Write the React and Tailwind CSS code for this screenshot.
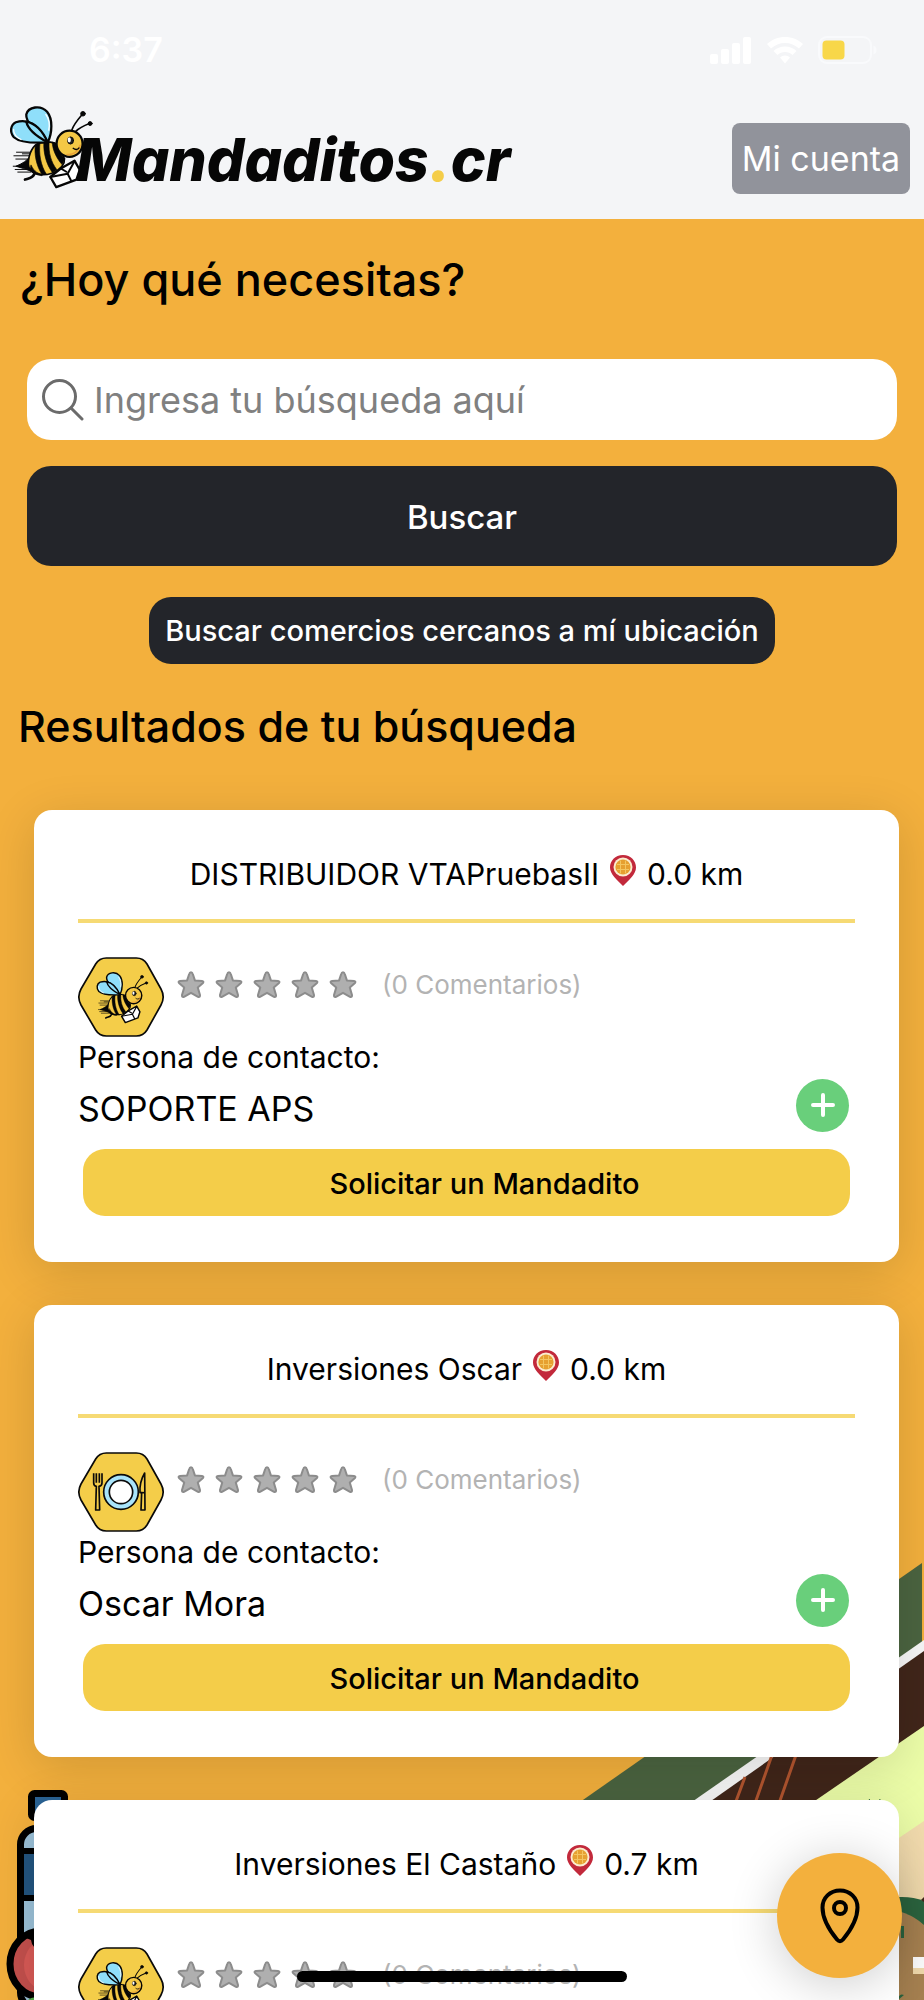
const businesses = [
  { name: 'DISTRIBUIDOR VTAPruebasII', distance: '0.0 km', contact: 'SOPORTE APS', kind: 'bee' },
  { name: 'Inversiones Oscar', distance: '0.0 km', contact: 'Oscar Mora', kind: 'food' },
  { name: 'Inversiones El Castaño', distance: '0.7 km', contact: null, kind: 'bee' },
];

function BeeShape() {
  return (
    <g stroke="#060606" strokeLinecap="round" strokeLinejoin="round">
      <g strokeWidth="3" fill="none">
        <path d="M50 186H98M42 197H92M48 207H90M40 229H90M46 239H92M54 247H94M68 191H100" />
      </g>
      <path d="M94 196C84 212 66 222 48 229C64 234 80 238 94 244Z" fill="#060606" strokeWidth="3" />
      <path d="M105 252C100 266 90 265 76 270M160 238C168 246 172 248 182 246" fill="none" strokeWidth="8" />
      <path d="M108 164C91 180 80 216 91 240C108 260 152 260 178 240C196 226 202 212 194 198L168 158C146 152 122 154 108 164Z" fill="#f4c845" strokeWidth="5" />
      <path d="M108 164C104 190 110 226 128 254L142 254C124 226 118 190 122 158ZM134 156C132 188 142 224 160 248L174 240C156 216 148 188 150 156ZM160 156C160 176 172 204 190 224L199 206C184 192 176 176 172 160ZM95 226C104 246 118 253 132 254L128 258C110 256 98 250 90 240Z" fill="#060606" strokeWidth="2" />
      <path d="M146 156C112 128 78 96 80 70C86 46 124 40 144 62C162 84 160 126 146 156Z" fill="#8fdffa" strokeWidth="7" />
      <path d="M146 156C112 158 62 158 42 140C28 124 32 102 48 94C86 82 114 100 146 156Z" fill="#8fdffa" strokeWidth="7" />
      <path d="M80 92C84 112 108 136 146 156C132 124 112 98 80 92Z" fill="#8fdffa" strokeWidth="7" />
      <path d="M140 70C150 84 152 104 149 118M41 116C40 128 50 142 64 147" fill="none" stroke="#fff" strokeWidth="4" />
      <circle cx="213" cy="160" r="40" fill="#f4c845" strokeWidth="7" />
      <path d="M245 165C240 185 222 195 205 193" fill="none" stroke="#e9a23a" strokeWidth="5" />
      <ellipse cx="216" cy="150" rx="9" ry="11" fill="#222" strokeWidth="3" />
      <ellipse cx="212" cy="148" rx="5" ry="8" fill="#fff" stroke="none" />
      <path d="M224 174C230 179 238 179 242 173" fill="none" strokeWidth="4" />
      <path d="M220 118C226 100 240 84 252 70M232 122C242 112 256 105 274 98" fill="none" strokeWidth="5" />
      <circle cx="254" cy="68" r="7" fill="#060606" strokeWidth="3" />
      <circle cx="276" cy="98" r="6" fill="#060606" strokeWidth="3" />
      <path d="M154 262L186 236L228 212L244 240L234 270L172 293Z" fill="#fff" strokeWidth="7" />
      <path d="M154 262L207 252L218 274M207 252L228 214M186 236L203 246" fill="none" strokeWidth="6" />
    </g>
  );
}

function Hexagon({ kind }) {
  return (
    <svg viewBox="0 0 258 240" className="h-20 w-[86px] shrink-0" aria-hidden="true">
      <path
        d="M85 3H175Q196 3 207 21L249 96Q262 120 249 144L207 219Q196 237 175 237H85Q64 237 53 219L9 144Q-4 120 9 96L53 21Q64 3 85 3Z"
        fill="#f4cd49"
        stroke="#0a0a0a"
        strokeWidth="5"
      />
      {kind === 'bee' ? (
        <g transform="translate(37 18) scale(0.61)">
          <BeeShape />
        </g>
      ) : (
        <g stroke="#0a0a0a" strokeLinejoin="round">
          <circle cx="129" cy="120" r="52" fill="#a9e4fa" strokeWidth="5" />
          <circle cx="129" cy="120" r="35" fill="#fff" strokeWidth="5" />
          <path d="M47 64V92Q47 101 55 103L53 174H65L63 103Q72 101 72 92V64M55 64V92M64 64V92" fill="#f4cd49" strokeWidth="5" />
          <path d="M200 63Q184 90 186 122H191L189 174H201Z" fill="#f4cd49" strokeWidth="5" />
          <path d="M191 122H200" strokeWidth="5" />
        </g>
      )}
    </svg>
  );
}

function Star() {
  return (
    <svg viewBox="0 0 30 30" className="size-[30px]" aria-hidden="true">
      <path
        d="M15 2.200Q16.300 2.200 16.800 4L18.900 10.400L26 10.900Q28.200 11.300 27 13L21.800 17.600L24 25Q24.200 27.600 22 26.800L15 22.800L8 26.800Q5.800 27.600 6 25L8.200 17.600L3 13Q1.800 11.300 4 10.900L11.100 10.400L13.200 4Q13.700 2.200 15 2.200Z"
        fill="#afafaf"
        stroke="#8c8c8c"
        strokeWidth="2"
        strokeLinejoin="round"
      />
    </svg>
  );
}

function DistancePin() {
  return (
    <svg viewBox="0 0 28 31" className="mx-2.5 mb-2 inline-block h-[31px] w-7" aria-hidden="true">
      <path d="M14 0C6 0 1 6 1 12.500C1 19 8 25 14 31C20 25 27 19 27 12.500C27 6 22 0 14 0Z" fill="#c2293b" />
      <circle cx="14" cy="12" r="9.500" fill="#fbeccf" />
      <circle cx="14" cy="12" r="7.600" fill="#e6a030" />
      <path d="M8 9.500H20M8 14.500H20M11.500 5.500V18.500M16.500 5.500V18.500" stroke="#f3c560" strokeWidth="1" />
    </svg>
  );
}

function BusinessCard({ business }) {
  return (
    <article className="rounded-[18px] bg-white px-11 pt-11 pb-[46px] shadow-[0_10px_50px_rgba(0,0,0,0.14)]">
      <h3 className="flex h-10 items-center justify-center text-[30px] leading-10">
        <span>{business.name}</span>
        <DistancePin />
        <span>{business.distance}</span>
      </h3>
      <hr className="mt-[25px] border-t-4 border-[#f6da74]" />
      <div className="mt-[34px] flex gap-3">
        <Hexagon kind={business.kind} />
        <div className="flex h-14 items-center gap-2">
          <Star />
          <Star />
          <Star />
          <Star />
          <Star />
          <span className="ml-4 text-[26px] leading-10 text-[#b3b3b3]">(0 Comentarios)</span>
        </div>
      </div>
      {business.contact && (
        <>
          <p className="text-[30px] leading-10">Persona de contacto:</p>
          <div className="flex h-14 items-center justify-between pr-[6px]">
            <p className="pt-2 text-[34px] leading-10">{business.contact}</p>
            <button type="button" aria-label="Agregar" className="flex size-[53px] items-center justify-center rounded-full bg-[#69cf7b]">
              <svg viewBox="0 0 24 24" className="size-6" aria-hidden="true">
                <path d="M12 2V22M2 12H22" stroke="#fff" strokeWidth="4" strokeLinecap="round" />
              </svg>
            </button>
          </div>
          <div className="mt-4 px-[5px]">
            <button type="button" className="h-[67px] w-full rounded-[22px] bg-[#f4cd49] pt-0.5 pl-9 text-[29px] leading-10 font-medium">
              Solicitar un Mandadito
            </button>
          </div>
        </>
      )}
    </article>
  );
}

function StatusBar() {
  return (
    <div className="flex h-[100px] items-center justify-between pr-[47px] pl-[89px] text-white">
      <span className="text-[34px] leading-10 font-semibold">6:37</span>
      <div className="flex items-center gap-[15px]">
        <svg viewBox="0 0 42 27" className="h-[27px] w-[42px]" fill="#fff" aria-hidden="true">
          <rect x="0" y="17" width="8" height="10" rx="2" />
          <rect x="11" y="12" width="8" height="15" rx="2" />
          <rect x="22" y="6" width="8" height="21" rx="2" />
          <rect x="33" y="0" width="8" height="27" rx="2" />
        </svg>
        <svg viewBox="0 0 36 27" className="h-[27px] w-9" fill="#fff" aria-hidden="true">
          <path d="M18 0C11 0 5 2.500 0 7L4 11.500C8 8 12.500 6 18 6S28 8 32 11.500L36 7C31 2.500 25 0 18 0Z" />
          <path d="M18 9.500C13.500 9.500 9.500 11 6.500 14L10.500 18C12.500 16.200 15 15 18 15S23.500 16.200 25.500 18L29.500 14C26.500 11 22.500 9.500 18 9.500Z" />
          <path d="M18 18.500C16 18.500 14.300 19.300 13 20.500L18 26.500L23 20.500C21.700 19.300 20 18.500 18 18.500Z" />
        </svg>
        <svg viewBox="0 0 59 28" className="h-7 w-[59px]" aria-hidden="true">
          <rect x="1" y="1" width="52" height="26" rx="8" fill="none" stroke="#f9fafc" strokeWidth="2" />
          <path d="M55.500 9.500Q58.500 10.500 58.500 14T55.500 18.500Z" fill="#f9fafc" />
          <rect x="4.500" y="4.500" width="22" height="19" rx="4" fill="#f8d749" />
        </svg>
      </div>
    </div>
  );
}

function Backdrop() {
  return (
    <div className="pointer-events-none absolute inset-x-0 bottom-0 flex items-end justify-between" aria-hidden="true">
      <svg viewBox="0 1780 80 220" className="h-[220px] w-20">
        <rect x="31.500" y="1793.500" width="33" height="24" rx="3" fill="#2b6496" stroke="#000" strokeWidth="7" />
        <rect x="20.500" y="1828.500" width="60" height="180" rx="16" fill="#9bc1d8" stroke="#000" strokeWidth="7" />
        <rect x="21" y="1851" width="56" height="47" fill="#235580" stroke="#000" strokeWidth="6" />
        <ellipse cx="41" cy="1964" rx="31" ry="33" fill="#c4504d" stroke="#000" strokeWidth="7" />
        <ellipse cx="45" cy="1965" rx="21" ry="25" fill="#d85a56" />
        <path d="M26 1938Q30 1929 40 1929V1950Q32 1948 31 1940Z" fill="#000" />
        <path d="M28 2000Q32 1996 40 1998V2000Z" fill="#56b04c" />
      </svg>
      <svg viewBox="560 1550 364 450" className="h-[450px] w-[364px]">
        <path d="M560 1816L922 1563V1660L694 1820H560Z" fill="#4b6440" />
        <path d="M666 1820L924 1640V1700L700 1820Z" fill="#f7f7f7" />
        <path d="M684 1820L924 1651V1740L800 1820Z" fill="#41261a" />
        <path d="M745 1777L732 1812M772 1755L752 1812M796 1755L776 1812" stroke="#b2552f" strokeWidth="3" />
        <path d="M787 1820L924 1726V1830L850 1880L787 1850Z" fill="#ecfda8" />
        <path d="M869 1799L872 1803M880 1799L879 1803" stroke="#2c6640" strokeWidth="1" />
        <path d="M850 1871L924 1821V2000H850Z" fill="#f3dcae" />
        <path d="M880 1897H902Q914 1897 924 1901V2000H880Z" fill="#2c6640" />
        <path d="M880 1908Q908 1910 924 1925V2000H880Z" fill="#a98352" />
        <path d="M921 1900L924 1897V1902Z" fill="#41261a" />
        <rect x="901" y="1926" width="3" height="12" fill="#2c6640" />
        <path d="M898 1998Q900 1993 904 1995L898 2000Z" fill="#2c6640" />
        <rect x="913" y="1957" width="11" height="11" fill="#fff" />
        <rect x="913" y="1968" width="11" height="6" fill="#f3dcae" />
      </svg>
    </div>
  );
}

export default function App() {
  return (
    <div className="relative flex h-screen flex-col overflow-hidden bg-[#f3b03d] font-[Inter,sans-serif] text-black">
      <Backdrop />
      <header className="h-[219px] shrink-0 bg-[#f4f5f7]">
        <StatusBar />
        <div className="flex items-start justify-between pr-3.5 pl-2">
          <a href="#inicio" aria-label="Mandaditos.cr" className="flex items-end pt-1">
            <svg viewBox="24 38 270 264" className="h-[86px] w-[88px] shrink-0" aria-hidden="true">
              <BeeShape />
            </svg>
            <span className="-ml-5 text-[59px] leading-[60px] font-extrabold text-[#060606] italic [font-feature-settings:'cv11']">
              Mandaditos<span className="font-black text-[#f4cd49]">.</span>cr
            </span>
          </a>
          <button type="button" className="mt-[23px] h-[71px] w-[178px] rounded-lg bg-[#91939b] text-[34px] leading-10 text-white">
            Mi cuenta
          </button>
        </div>
      </header>

      <main className="relative">
        <h1 className="px-5 pt-[31px] text-[45px] leading-[60px] font-medium">¿Hoy qué necesitas?</h1>
        <form className="px-[27px] pt-[49px]" onSubmit={(event) => event.preventDefault()}>
          <label className="flex h-[81px] items-center gap-2.5 rounded-3xl bg-white pr-6 pl-[15px]">
            <svg viewBox="0 0 42 42" className="size-[42px] shrink-0" fill="none" stroke="#6b6b6b" strokeWidth="3" strokeLinecap="round" aria-hidden="true">
              <circle cx="17.500" cy="17.500" r="16" />
              <path d="M29 29L40 40" />
            </svg>
            <input
              type="text"
              aria-label="Búsqueda"
              placeholder="Ingresa tu búsqueda aquí"
              className="h-full min-w-0 grow bg-transparent text-[36px] outline-none placeholder:text-[#808080]"
            />
          </label>
          <button type="submit" className="mt-[26px] h-[100px] w-full rounded-3xl bg-[#23252a] pt-0.5 text-[33px] leading-10 font-medium text-white">
            Buscar
          </button>
        </form>
        <div className="flex justify-center pt-[31px]">
          <button type="button" className="h-[67px] rounded-[22px] bg-[#23252a] px-4 text-[29px] leading-10 font-medium text-white">
            Buscar comercios cercanos a mí ubicación
          </button>
        </div>
        <h2 className="px-[18px] pt-8 text-[43px] leading-[60px] font-medium">Resultados de tu búsqueda</h2>
        <div className="flex flex-col gap-[43px] pt-[54px] pr-[25px] pl-[34px]">
          {businesses.map((business) => (
            <BusinessCard key={business.name} business={business} />
          ))}
        </div>
      </main>

      <button
        type="button"
        aria-label="Mi ubicación"
        className="fixed right-[22px] bottom-[22px] flex size-[125px] items-center justify-center rounded-full bg-[#f3b03d] shadow-[0_6px_50px_rgba(0,0,0,0.2)]"
      >
        <svg viewBox="0 0 40 56" className="h-14 w-10" fill="none" stroke="#000" strokeWidth="4" strokeLinejoin="round" aria-hidden="true">
          <path d="M20 2.500C10 2.500 2.500 10 2.500 19.500C2.500 31 10 43 17 51.500Q20 55 23 51.500C30 43 37.500 31 37.500 19.500C37.500 10 30 2.500 20 2.500Z" />
          <circle cx="20" cy="20" r="6" />
        </svg>
      </button>
      <div className="pointer-events-none fixed inset-x-0 bottom-[18px] flex justify-center">
        <div className="h-[11px] w-[330px] rounded-full bg-black" />
      </div>
    </div>
  );
}
